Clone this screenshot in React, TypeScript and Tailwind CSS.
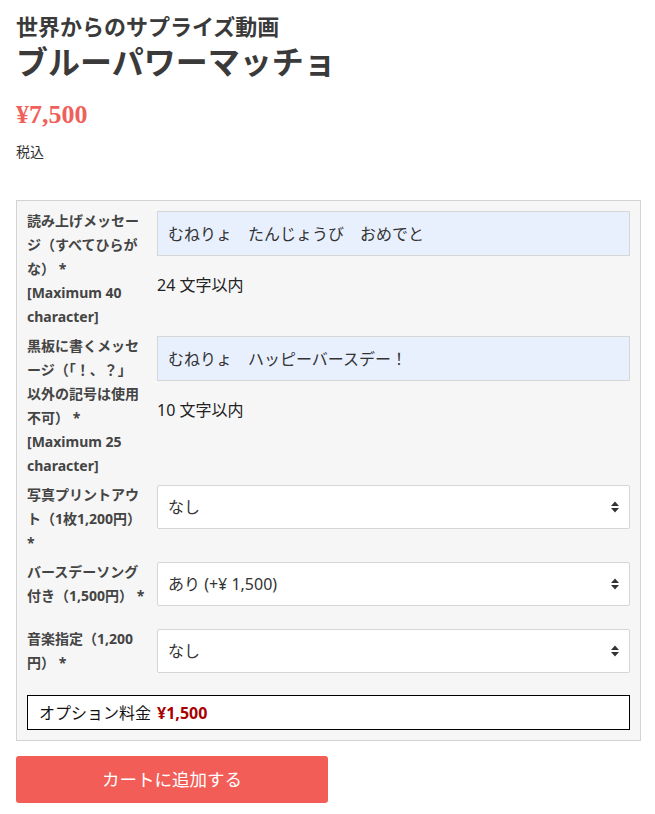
import React from "react";

const JP = "font-['Noto_Sans','Noto_Sans_CJK_JP',sans-serif]";

function Arrows() {
  return (
    <svg width="8" height="12" viewBox="0 0 8 12" className="absolute right-[10px] top-1/2 -translate-y-1/2">
      <path d="M4 0.5 L8 5 L0 5 Z" fill="#333" />
      <path d="M0 7 L8 7 L4 11.5 Z" fill="#333" />
    </svg>
  );
}

function Select({ value }: { value: string }) {
  return (
    <div className="relative mt-[2px] mb-[16px] h-[44px] bg-white border border-[#d6d6d6] rounded-[2px] flex items-center pl-[10px] text-[16px] text-[#333]">
      <span>{value}</span>
      <Arrows />
    </div>
  );
}

function Input({ value }: { value: string }) {
  return (
    <div className="mt-[2px] h-[45px] bg-[#e8f0fe] border border-[#d6d6d6] flex items-center pl-[10px] text-[16px] text-[#333] whitespace-pre">
      {value}
    </div>
  );
}

function Label({ lines }: { lines: string[] }) {
  return (
    <div className="w-[118px] shrink-0 text-[14px] font-bold leading-[24px] text-[#444] whitespace-nowrap">
      {lines.map((l, i) => (
        <div key={i}>{l}</div>
      ))}
    </div>
  );
}

export default function App() {
  return (
    <div className={`${JP} bg-white w-[655px] min-h-[814px] pl-[16px] pr-[14px] pt-[11px] text-[#333]`}>
      <div className="text-[22px] font-bold leading-[30px] text-[#3a3a3a]">世界からのサプライズ動画</div>
      <div className="text-[32px] font-bold leading-[42px] text-[#3a3a3a]">ブルーパワーマッチョ</div>
      <div className="mt-[16px] font-['Liberation_Serif',serif] text-[26px] font-bold leading-[32px] text-[#f05f5a]">¥7,500</div>
      <div className="mt-[11px] text-[14px] leading-[20px] text-[#333]">税込</div>

      <div className="mt-[38px] border border-[#d3d3d3] bg-[#f6f6f6] pt-[8px] px-[10px] pb-[10px]">
        <div className="flex mb-[5px]">
          <Label lines={["読み上げメッセー", "ジ（すべてひらが", "な） *", "[Maximum 40", "character]"]} />
          <div className="flex-1 ml-[12px]">
            <Input value="むねりょ　たんじょうび　おめでと" />
            <div className="mt-[17px] text-[16px] leading-[24px] text-[#222]">24 文字以内</div>
          </div>
        </div>
        <div className="flex mb-[5px]">
          <Label lines={["黒板に書くメッセ", "ージ（「！、？」", "以外の記号は使用", "不可） *", "[Maximum 25", "character]"]} />
          <div className="flex-1 ml-[12px]">
            <Input value="むねりょ　ハッピーバースデー！" />
            <div className="mt-[17px] text-[16px] leading-[24px] text-[#222]">10 文字以内</div>
          </div>
        </div>
        <div className="flex mb-[5px]">
          <Label lines={["写真プリントアウ", "ト（1枚1,200円）", "*"]} />
          <div className="flex-1 ml-[12px]">
            <Select value="なし" />
          </div>
        </div>
        <div className="flex mb-[5px]">
          <Label lines={["バースデーソング", "付き（1,500円） *"]} />
          <div className="flex-1 ml-[12px]">
            <Select value="あり (+¥ 1,500)" />
          </div>
        </div>
        <div className="flex mb-[5px]">
          <Label lines={["音楽指定（1,200", "円） *"]} />
          <div className="flex-1 ml-[12px]">
            <Select value="なし" />
          </div>
        </div>
        <div className="mt-[6px] h-[35px] border border-black bg-white flex items-center pl-[11px] text-[16px] text-[#111]">
          <span>オプション料金</span>
          <span className="ml-[6px] font-bold text-[#a80000]">¥1,500</span>
        </div>
      </div>

      <button className="mt-[15px] w-[312px] h-[47px] bg-[#f25d58] rounded-[3px] text-white text-[17.5px] flex items-center justify-center">
        カートに追加する
      </button>
    </div>
  );
}
